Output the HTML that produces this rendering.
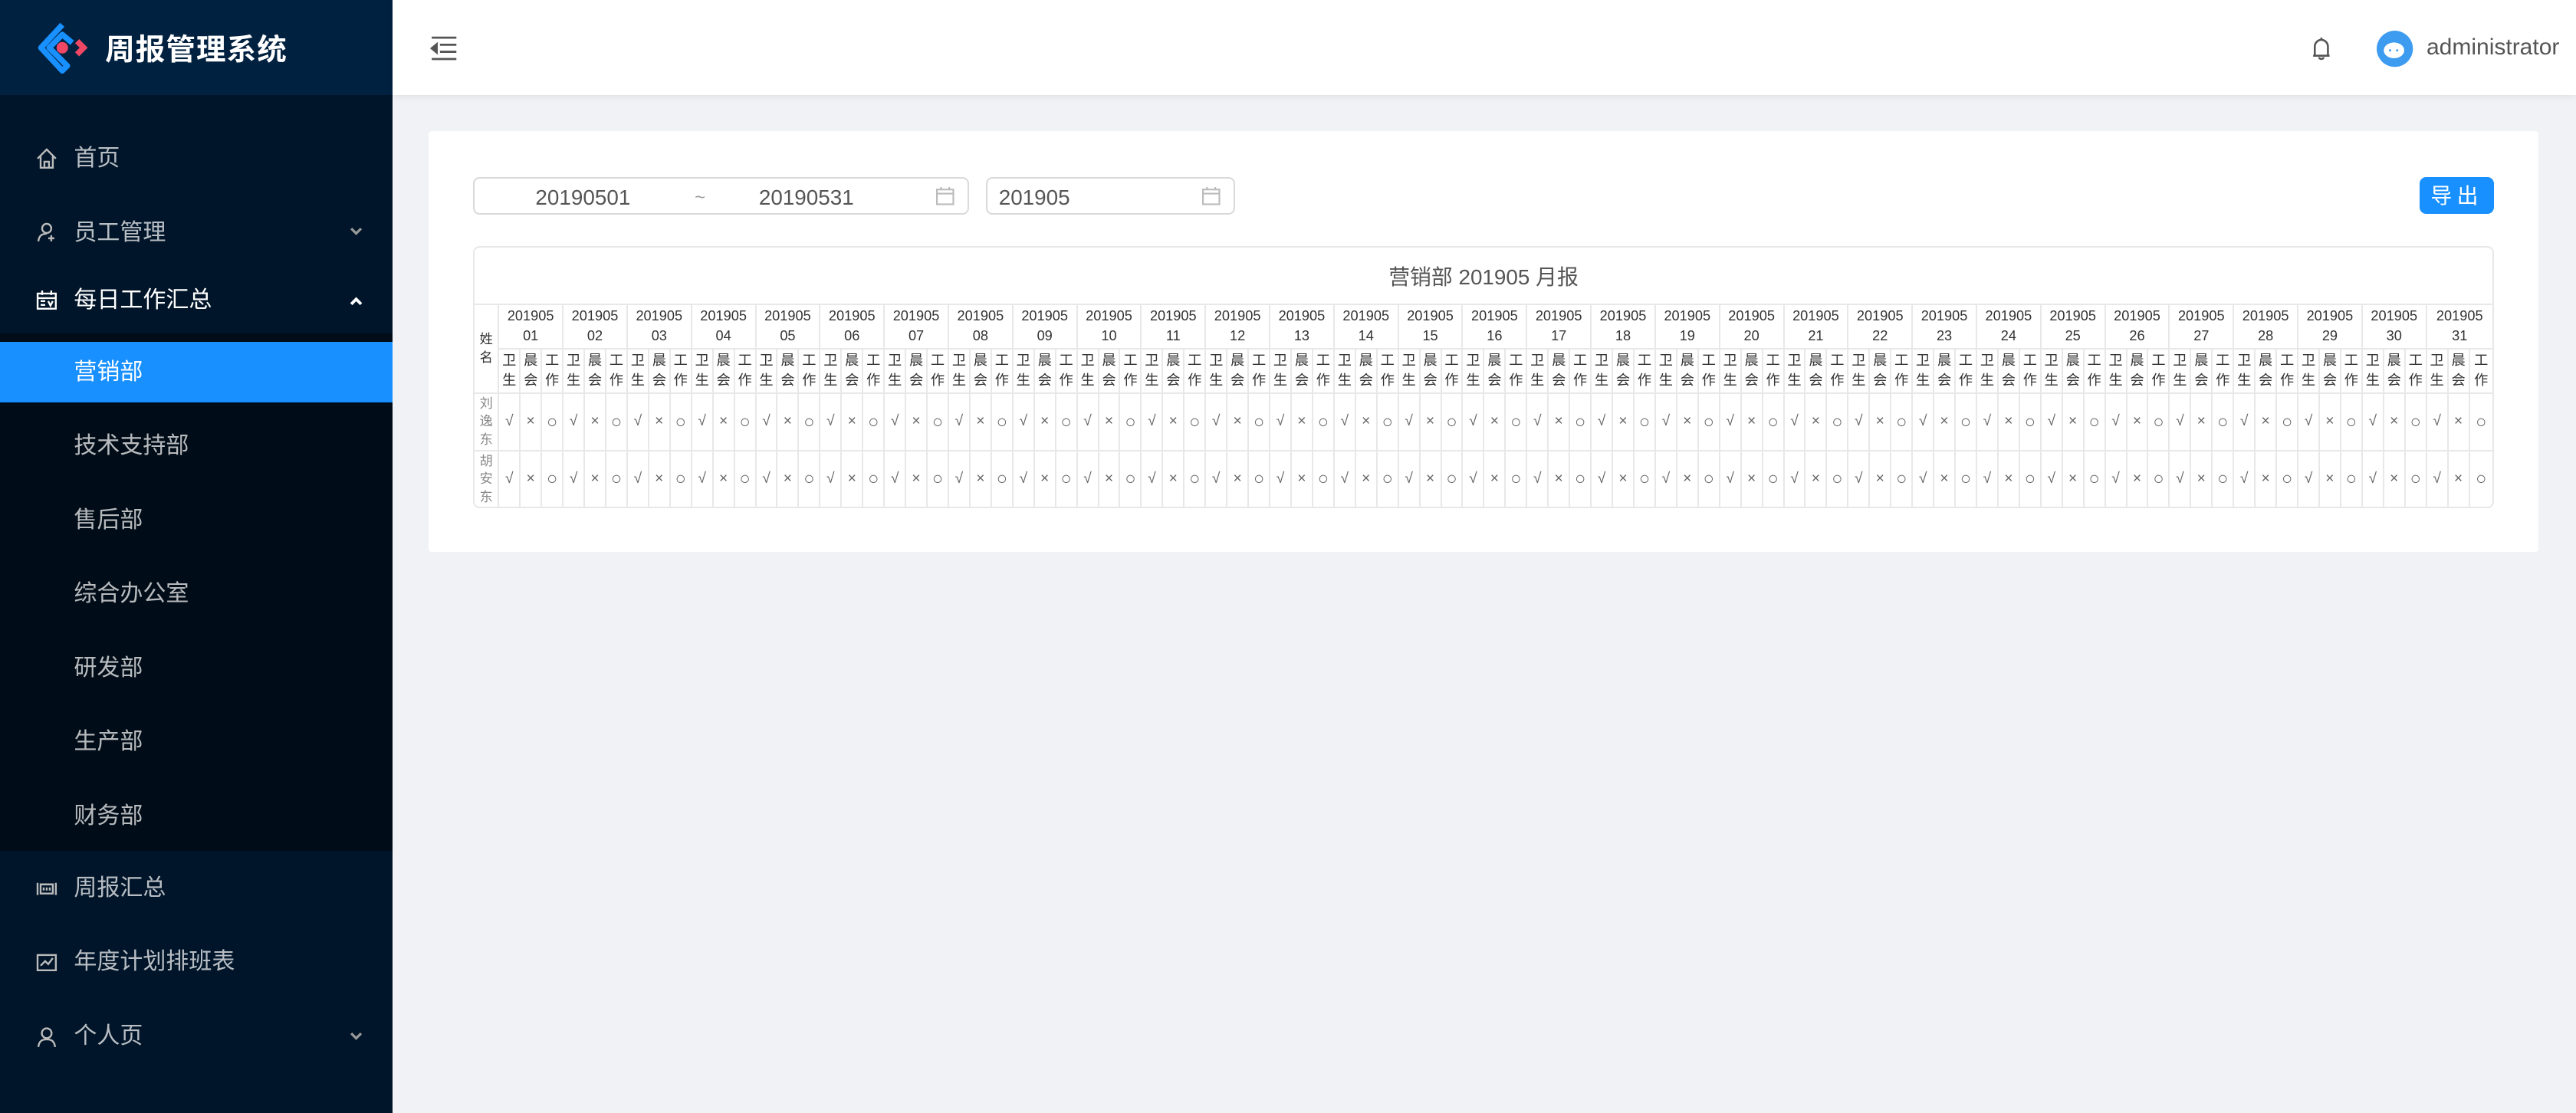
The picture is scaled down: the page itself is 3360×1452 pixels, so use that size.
<!DOCTYPE html>
<html><head><meta charset="utf-8">
<style>
html,body{margin:0;padding:0;width:3360px;height:1452px;overflow:hidden;background:#f0f2f5}
#root{zoom:2.142857;width:1568px;height:678px;position:relative;font-family:"Liberation Sans","Noto Sans CJK SC",sans-serif}
.side{position:absolute;left:0;top:0;width:239px;height:678px;background:#001529}
.logo{position:absolute;left:0;top:0;width:239px;height:58px;background:#002140}
.logo .t{position:absolute;left:64px;top:16px;color:#fff;font-size:18px;font-weight:bold;letter-spacing:.5px}
.sub{position:absolute;left:0;top:203px;width:239px;height:315px;background:#000c17}
.mi{position:absolute;left:45px;font-size:14px;color:rgba(255,255,255,.72);line-height:20px}
.act{position:absolute;left:0;top:208px;width:239px;height:37px;background:#1890ff}
.ic{position:absolute;left:22px}
.hdr{position:absolute;left:239px;top:0;right:0;height:58px;background:#fff;box-shadow:0 1px 4px rgba(0,21,41,.08)}
.card{position:absolute;left:261px;top:80px;width:1284px;height:256px;background:#fff;border-radius:2px}
.inp{position:absolute;top:108px;height:21px;border:1px solid #d9d9d9;border-radius:4px;background:#fff;font-size:13px;color:#555;line-height:23px}
.btn{position:absolute;left:1473px;top:108px;width:45px;height:22px;background:#1890ff;border-radius:4px;color:#fff;font-size:13px;text-align:center;line-height:23px;letter-spacing:3px}
table{position:absolute;left:288px;top:150px;width:1230px;border-collapse:separate;border-spacing:0;table-layout:fixed;border:1px solid #e8e8e8;border-radius:4px;font-size:8.5px;color:#333}
td,th{border-right:1px solid #e8e8e8;border-bottom:1px solid #e8e8e8;padding:0;text-align:center;font-weight:normal;overflow:hidden}
tr td:last-child,tr th:last-child{border-right:none}
.ti{height:34px;font-size:13px;color:#555}
.r1 th{height:26px;line-height:12px}
.r2 th{height:26px;line-height:12px}
.d td{height:34px;color:#666;font-size:9px}
.d td:nth-child(3n+4){font-size:11px}
.d td.n{line-height:11px;font-size:8px;color:#888}
tr.last td{border-bottom:none}
</style></head><body><div id="root">
<div class="side">
<div class="logo">
<svg style="position:absolute;left:22px;top:13px" width="32" height="32" viewBox="0 0 32 32"><path d="M16 2 L3 16 L16 30 L19 27 L8 16 L16 8 L22 13" fill="none" stroke="#1890ff" stroke-width="3.5" stroke-linejoin="round"/><path d="M25 12 L29 16 L25 20" fill="none" stroke="#f04864" stroke-width="3.5"/><circle cx="16" cy="16" r="3.5" fill="#f04864"/></svg>
<div class="t">周报管理系统</div></div>
<div class="sub"></div>
<div class="act"></div>
<svg class="ic" style="top:90px" width="13" height="13" viewBox="0 0 14 14" fill="none" stroke="#bbb" stroke-width="1.2"><path d="M1 7 L7 1 L13 7 M3 5.5 V13 H11 V5.5 M5.5 13 V9 H8.5 V13"/></svg>
<div class="mi" style="top:87px">首页</div>
<svg class="ic" style="top:135px" width="13" height="13" viewBox="0 0 14 14" fill="none" stroke="#bbb" stroke-width="1.2"><circle cx="7" cy="4.5" r="3"/><path d="M1.5 13 C2 9 4 8 7 8 M10 9 V13 M8 11 H12"/></svg>
<div class="mi" style="top:132px">员工管理</div>
<svg style="position:absolute;left:213px;top:138px" width="8" height="6" viewBox="0 0 8 6"><path d="M1 1 L4 4 L7 1" fill="none" stroke="#999" stroke-width="1.5"/></svg>
<svg class="ic" style="top:177px" width="13" height="12" viewBox="0 0 14 13" fill="none" stroke="#fff" stroke-width="1.2"><rect x="1" y="2" width="12" height="10"/><path d="M1 5 H13 M4 0 V3 M10 0 V3 M3 7 H6 M3 9.5 H6 M8 7 L9.5 10 L11 7"/></svg>
<div class="mi" style="top:173px;color:#fff">每日工作汇总</div>
<svg style="position:absolute;left:213px;top:180px" width="8" height="6" viewBox="0 0 8 6"><path d="M1 5 L4 2 L7 5" fill="none" stroke="#fff" stroke-width="1.8"/></svg>
<div class="mi" style="top:217px;color:#fff">营销部</div>
<div class="mi" style="top:262px">技术支持部</div>
<div class="mi" style="top:307px">售后部</div>
<div class="mi" style="top:352px">综合办公室</div>
<div class="mi" style="top:397px">研发部</div>
<div class="mi" style="top:442px">生产部</div>
<div class="mi" style="top:487px">财务部</div>
<svg class="ic" style="top:536px" width="13" height="10" viewBox="0 0 14 10" fill="none" stroke="#bbb" stroke-width="1.2"><path d="M1 1 V9 M13 1 V9 M3 2 H11 V8 H3 Z M5 4 V6 M7 4 V6 M9 4 V6"/></svg>
<div class="mi" style="top:531px">周报汇总</div>
<svg class="ic" style="top:580px" width="13" height="12" viewBox="0 0 14 12" fill="none" stroke="#bbb" stroke-width="1.2"><rect x="1" y="1" width="12" height="10"/><path d="M3 8 L6 5 L8 7 L11 3"/></svg>
<div class="mi" style="top:576px">年度计划排班表</div>
<svg class="ic" style="top:625px" width="13" height="13" viewBox="0 0 14 14" fill="none" stroke="#bbb" stroke-width="1.2"><circle cx="7" cy="4.5" r="3.2"/><path d="M1.5 13.5 C2 9.5 4 8.5 7 8.5 C10 8.5 12 9.5 12.5 13.5"/></svg>
<div class="mi" style="top:621px">个人页</div>
<svg style="position:absolute;left:213px;top:628px" width="8" height="6" viewBox="0 0 8 6"><path d="M1 1 L4 4 L7 1" fill="none" stroke="#999" stroke-width="1.5"/></svg>
</div>
<div class="hdr">
<svg style="position:absolute;left:23px;top:22px" width="17" height="15" viewBox="0 0 17 15" fill="none" stroke="#555" stroke-width="1.3"><path d="M1 1 H16 M6 5.3 H16 M6 9.6 H16 M1 14 H16"/><path d="M4 5 L1 7.5 L4 10 Z" fill="#555"/></svg>
<svg style="position:absolute;left:1168px;top:22px" width="12" height="15" viewBox="0 0 12 15" fill="none" stroke="#555" stroke-width="1.2"><path d="M6 1 V2 M2 12 V6.5 C2 4 4 2.3 6 2.3 C8 2.3 10 4 10 6.5 V12 M1 12 H11 M4.5 13 C5 14.3 7 14.3 7.5 13"/></svg>
<svg style="position:absolute;left:1207px;top:18px" width="23" height="23" viewBox="0 0 24 24"><circle cx="12" cy="12" r="11.5" fill="#3d9bf0"/><ellipse cx="11.5" cy="13" rx="6.5" ry="5" fill="#fff"/><circle cx="9" cy="13" r=".7" fill="#3d9bf0"/><circle cx="13.5" cy="13" r=".7" fill="#3d9bf0"/></svg>
<div style="position:absolute;left:1238px;top:21px;font-size:14px;color:#555">administrator</div>
</div>
<div class="card"></div>
<div class="inp" style="left:288px;width:300px"><span style="position:absolute;left:37px">20190501</span><span style="position:absolute;left:134px;font-size:11px;color:#999">~</span><span style="position:absolute;left:173px">20190531</span>
<svg style="position:absolute;left:281px;top:5px" width="11" height="11" viewBox="0 0 11 11" fill="none" stroke="#bbb"><rect x=".5" y="1.5" width="10" height="9"/><path d="M.5 4 H10.5 M3 0 V2 M8 0 V2"/></svg></div>
<div class="inp" style="left:600px;width:150px"><span style="position:absolute;left:7px">201905</span>
<svg style="position:absolute;left:131px;top:5px" width="11" height="11" viewBox="0 0 11 11" fill="none" stroke="#bbb"><rect x=".5" y="1.5" width="10" height="9"/><path d="M.5 4 H10.5 M3 0 V2 M8 0 V2"/></svg></div>
<div class="btn">导出</div>
<table>
<colgroup><col style="width:15px"><col span="93"></colgroup>
<tr><td class="ti" colspan="94">营销部 201905 月报</td></tr>
<tr class="r1"><th rowspan="2" style="font-size:8px;line-height:11px">姓<br>名</th>
<th colspan="3">201905<br>01</th><th colspan="3">201905<br>02</th><th colspan="3">201905<br>03</th><th colspan="3">201905<br>04</th><th colspan="3">201905<br>05</th>
<th colspan="3">201905<br>06</th><th colspan="3">201905<br>07</th><th colspan="3">201905<br>08</th><th colspan="3">201905<br>09</th><th colspan="3">201905<br>10</th>
<th colspan="3">201905<br>11</th><th colspan="3">201905<br>12</th><th colspan="3">201905<br>13</th><th colspan="3">201905<br>14</th><th colspan="3">201905<br>15</th>
<th colspan="3">201905<br>16</th><th colspan="3">201905<br>17</th><th colspan="3">201905<br>18</th><th colspan="3">201905<br>19</th><th colspan="3">201905<br>20</th>
<th colspan="3">201905<br>21</th><th colspan="3">201905<br>22</th><th colspan="3">201905<br>23</th><th colspan="3">201905<br>24</th><th colspan="3">201905<br>25</th>
<th colspan="3">201905<br>26</th><th colspan="3">201905<br>27</th><th colspan="3">201905<br>28</th><th colspan="3">201905<br>29</th><th colspan="3">201905<br>30</th>
<th colspan="3">201905<br>31</th></tr>
<tr class="r2">
<th>卫<br>生</th><th>晨<br>会</th><th>工<br>作</th> <th>卫<br>生</th><th>晨<br>会</th><th>工<br>作</th> <th>卫<br>生</th><th>晨<br>会</th><th>工<br>作</th> <th>卫<br>生</th><th>晨<br>会</th><th>工<br>作</th> <th>卫<br>生</th><th>晨<br>会</th><th>工<br>作</th>
<th>卫<br>生</th><th>晨<br>会</th><th>工<br>作</th> <th>卫<br>生</th><th>晨<br>会</th><th>工<br>作</th> <th>卫<br>生</th><th>晨<br>会</th><th>工<br>作</th> <th>卫<br>生</th><th>晨<br>会</th><th>工<br>作</th> <th>卫<br>生</th><th>晨<br>会</th><th>工<br>作</th>
<th>卫<br>生</th><th>晨<br>会</th><th>工<br>作</th> <th>卫<br>生</th><th>晨<br>会</th><th>工<br>作</th> <th>卫<br>生</th><th>晨<br>会</th><th>工<br>作</th> <th>卫<br>生</th><th>晨<br>会</th><th>工<br>作</th> <th>卫<br>生</th><th>晨<br>会</th><th>工<br>作</th>
<th>卫<br>生</th><th>晨<br>会</th><th>工<br>作</th> <th>卫<br>生</th><th>晨<br>会</th><th>工<br>作</th> <th>卫<br>生</th><th>晨<br>会</th><th>工<br>作</th> <th>卫<br>生</th><th>晨<br>会</th><th>工<br>作</th> <th>卫<br>生</th><th>晨<br>会</th><th>工<br>作</th>
<th>卫<br>生</th><th>晨<br>会</th><th>工<br>作</th> <th>卫<br>生</th><th>晨<br>会</th><th>工<br>作</th> <th>卫<br>生</th><th>晨<br>会</th><th>工<br>作</th> <th>卫<br>生</th><th>晨<br>会</th><th>工<br>作</th> <th>卫<br>生</th><th>晨<br>会</th><th>工<br>作</th>
<th>卫<br>生</th><th>晨<br>会</th><th>工<br>作</th> <th>卫<br>生</th><th>晨<br>会</th><th>工<br>作</th> <th>卫<br>生</th><th>晨<br>会</th><th>工<br>作</th> <th>卫<br>生</th><th>晨<br>会</th><th>工<br>作</th> <th>卫<br>生</th><th>晨<br>会</th><th>工<br>作</th>
<th>卫<br>生</th><th>晨<br>会</th><th>工<br>作</th>
</tr>
<tr class="d"><td class="n">刘<br>逸<br>东</td>
<td>√</td><td>×</td><td>○</td> <td>√</td><td>×</td><td>○</td> <td>√</td><td>×</td><td>○</td> <td>√</td><td>×</td><td>○</td> <td>√</td><td>×</td><td>○</td>
<td>√</td><td>×</td><td>○</td> <td>√</td><td>×</td><td>○</td> <td>√</td><td>×</td><td>○</td> <td>√</td><td>×</td><td>○</td> <td>√</td><td>×</td><td>○</td>
<td>√</td><td>×</td><td>○</td> <td>√</td><td>×</td><td>○</td> <td>√</td><td>×</td><td>○</td> <td>√</td><td>×</td><td>○</td> <td>√</td><td>×</td><td>○</td>
<td>√</td><td>×</td><td>○</td> <td>√</td><td>×</td><td>○</td> <td>√</td><td>×</td><td>○</td> <td>√</td><td>×</td><td>○</td> <td>√</td><td>×</td><td>○</td>
<td>√</td><td>×</td><td>○</td> <td>√</td><td>×</td><td>○</td> <td>√</td><td>×</td><td>○</td> <td>√</td><td>×</td><td>○</td> <td>√</td><td>×</td><td>○</td>
<td>√</td><td>×</td><td>○</td> <td>√</td><td>×</td><td>○</td> <td>√</td><td>×</td><td>○</td> <td>√</td><td>×</td><td>○</td> <td>√</td><td>×</td><td>○</td>
<td>√</td><td>×</td><td>○</td>
</tr>
<tr class="d last"><td class="n">胡<br>安<br>东</td>
<td>√</td><td>×</td><td>○</td> <td>√</td><td>×</td><td>○</td> <td>√</td><td>×</td><td>○</td> <td>√</td><td>×</td><td>○</td> <td>√</td><td>×</td><td>○</td>
<td>√</td><td>×</td><td>○</td> <td>√</td><td>×</td><td>○</td> <td>√</td><td>×</td><td>○</td> <td>√</td><td>×</td><td>○</td> <td>√</td><td>×</td><td>○</td>
<td>√</td><td>×</td><td>○</td> <td>√</td><td>×</td><td>○</td> <td>√</td><td>×</td><td>○</td> <td>√</td><td>×</td><td>○</td> <td>√</td><td>×</td><td>○</td>
<td>√</td><td>×</td><td>○</td> <td>√</td><td>×</td><td>○</td> <td>√</td><td>×</td><td>○</td> <td>√</td><td>×</td><td>○</td> <td>√</td><td>×</td><td>○</td>
<td>√</td><td>×</td><td>○</td> <td>√</td><td>×</td><td>○</td> <td>√</td><td>×</td><td>○</td> <td>√</td><td>×</td><td>○</td> <td>√</td><td>×</td><td>○</td>
<td>√</td><td>×</td><td>○</td> <td>√</td><td>×</td><td>○</td> <td>√</td><td>×</td><td>○</td> <td>√</td><td>×</td><td>○</td> <td>√</td><td>×</td><td>○</td>
<td>√</td><td>×</td><td>○</td>
</tr>
</table>
</div></body></html>
